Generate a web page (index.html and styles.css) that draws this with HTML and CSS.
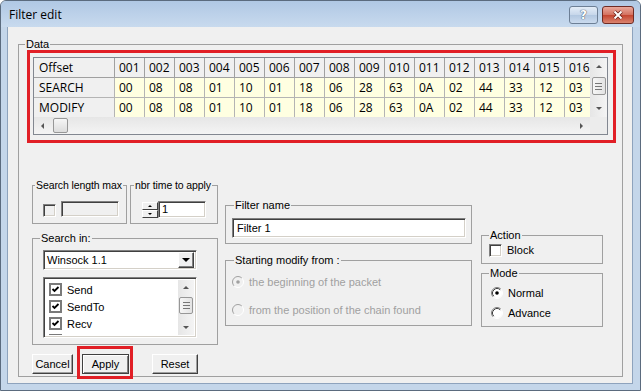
FILE: index.html
```html
<!DOCTYPE html>
<html lang="en">
<head>
    <meta charset="UTF-8">
    <title>Filter edit</title>
    <link rel="stylesheet" href="styles.css">
</head>
<body>
<div class="window">
    <div class="titlebar">
        <span class="title">Filter edit</span>
        <div class="caption">
            <span class="cap-btn help">?</span>
            <span class="cap-btn close">
                <svg width="14" height="10" viewBox="0 0 14 10"><path d="M3.5 1.5 L10.5 8.5 M10.5 1.5 L3.5 8.5" stroke="#6a2018" stroke-width="3.6"/><path d="M3.5 1.5 L10.5 8.5 M10.5 1.5 L3.5 8.5" stroke="#fff" stroke-width="2"/></svg>
            </span>
        </div>
    </div>

    <div class="client">
        <fieldset class="group g-data">
            <legend>Data</legend>

            <!-- offset / search / modify grid -->
            <div class="mark grid-mark">
                <div class="grid">
                    <div class="cells">
                        <table>
                            <tr class="head">
                                <td class="rh">Offset</td><td>001</td><td>002</td><td>003</td><td>004</td><td>005</td><td>006</td><td>007</td><td>008</td><td>009</td><td>010</td><td>011</td><td>012</td><td>013</td><td>014</td><td>015</td><td>016</td>
                            </tr>
                            <tr>
                                <td class="rh">SEARCH</td><td>00</td><td>08</td><td>08</td><td>01</td><td>10</td><td>01</td><td>18</td><td>06</td><td>28</td><td>63</td><td>0A</td><td>02</td><td>44</td><td>33</td><td>12</td><td>03</td>
                            </tr>
                            <tr>
                                <td class="rh">MODIFY</td><td>00</td><td>08</td><td>08</td><td>01</td><td>10</td><td>01</td><td>18</td><td>06</td><td>28</td><td>63</td><td>0A</td><td>02</td><td>44</td><td>33</td><td>12</td><td>03</td>
                            </tr>
                        </table>
                    </div>
                    <div class="vscroll">
                        <span class="sb-btn"><span class="arr up"></span></span>
                        <span class="thumb vthumb"><span class="grip"></span></span>
                        <span class="sb-btn end"><span class="arr down"></span></span>
                    </div>
                    <div class="hscroll">
                        <span class="sb-btn"><span class="arr left"></span></span>
                        <span class="thumb hthumb"></span>
                        <span class="sb-btn end"><span class="arr right"></span></span>
                    </div>
                    <div class="corner"></div>
                </div>
            </div>

            <div class="lower">
                <div class="col-left">
                    <div class="row-top">
                        <fieldset class="group g-slm">
                            <legend>Search length max</legend>
                            <div class="ctl-row">
                                <span class="chk off-dis"></span>
                                <span class="edit dis slm-edit"></span>
                            </div>
                        </fieldset>
                        <fieldset class="group g-nta">
                            <legend>nbr time to apply</legend>
                            <div class="ctl-row">
                                <span class="spin">
                                    <span class="spin-btn"><span class="arr up tiny"></span></span>
                                    <span class="spin-btn"><span class="arr down tiny"></span></span>
                                </span>
                                <span class="edit nta-edit">1</span>
                            </div>
                        </fieldset>
                    </div>

                    <fieldset class="group g-search">
                        <legend>Search in:</legend>
                        <div class="edit combo">
                            <span class="combo-text">Winsock 1.1</span>
                            <span class="combo-btn"><span class="arr down big"></span></span>
                        </div>
                        <div class="edit listbox">
                            <ul class="items">
                                <li><span class="chk flat"><svg width="9" height="9" viewBox="0 0 9 9"><path d="M1.5 4 L3.5 6 L7.5 2" stroke="#000" stroke-width="1.8" fill="none"/></svg></span>Send</li>
                                <li><span class="chk flat"><svg width="9" height="9" viewBox="0 0 9 9"><path d="M1.5 4 L3.5 6 L7.5 2" stroke="#000" stroke-width="1.8" fill="none"/></svg></span>SendTo</li>
                                <li><span class="chk flat"><svg width="9" height="9" viewBox="0 0 9 9"><path d="M1.5 4 L3.5 6 L7.5 2" stroke="#000" stroke-width="1.8" fill="none"/></svg></span>Recv</li>
                                <li><span class="chk flat"><svg width="9" height="9" viewBox="0 0 9 9"><path d="M1.5 4 L3.5 6 L7.5 2" stroke="#000" stroke-width="1.8" fill="none"/></svg></span>RecvFrom</li>
                            </ul>
                            <div class="lscroll">
                                <span class="sb-btn"><span class="arr up"></span></span>
                                <span class="thumb lthumb"><span class="grip"></span></span>
                                <span class="sb-btn end"><span class="arr down"></span></span>
                            </div>
                        </div>
                    </fieldset>

                    <div class="btn-row">
                        <button class="btn btn-cancel">Cancel</button>
                        <span class="mark apply-mark"><button class="btn btn-default">Apply</button></span>
                        <button class="btn btn-reset">Reset</button>
                    </div>
                </div>

                <div class="col-mid">
                    <fieldset class="group g-fname">
                        <legend>Filter name</legend>
                        <span class="edit fname-edit">Filter 1</span>
                    </fieldset>
                    <fieldset class="group g-modify">
                        <legend>Starting modify from :</legend>
                        <div class="opt dis first">
                            <svg class="radio" width="12" height="12" viewBox="0 0 12 12">
                                <circle cx="6" cy="6" r="5" fill="#f0f0f0"/>
                                <path d="M2.11 9.89A5.5 5.5 0 0 1 9.89 2.11" stroke="#a0a0a0" fill="none"/>
                                <path d="M9.89 2.11A5.5 5.5 0 0 1 2.11 9.89" stroke="#fff" fill="none"/>
                                <circle cx="6" cy="6" r="1.8" fill="#a0a0a0"/>
                            </svg>
                            the beginning of the packet
                        </div>
                        <div class="opt dis second">
                            <svg class="radio" width="12" height="12" viewBox="0 0 12 12">
                                <circle cx="6" cy="6" r="5" fill="#f0f0f0"/>
                                <path d="M2.11 9.89A5.5 5.5 0 0 1 9.89 2.11" stroke="#a0a0a0" fill="none"/>
                                <path d="M9.89 2.11A5.5 5.5 0 0 1 2.11 9.89" stroke="#fff" fill="none"/>
                            </svg>
                            from the position of the chain found
                        </div>
                    </fieldset>
                </div>

                <div class="col-right">
                    <fieldset class="group g-action">
                        <legend>Action</legend>
                        <div class="opt block-opt"><span class="chk"></span>Block</div>
                    </fieldset>
                    <fieldset class="group g-mode">
                        <legend>Mode</legend>
                        <div class="opt first">
                            <svg class="radio" width="12" height="12" viewBox="0 0 12 12">
                                <circle cx="6" cy="6" r="5" fill="#fff"/>
                                <path d="M2.11 9.89A5.5 5.5 0 0 1 9.89 2.11" stroke="#808080" fill="none"/>
                                <path d="M2.82 9.18A4.5 4.5 0 0 1 9.18 2.82" stroke="#404040" fill="none"/>
                                <path d="M9.89 2.11A5.5 5.5 0 0 1 2.11 9.89" stroke="#fff" fill="none"/>
                                <circle cx="6" cy="6" r="1.8" fill="#000"/>
                            </svg>
                            Normal
                        </div>
                        <div class="opt second">
                            <svg class="radio" width="12" height="12" viewBox="0 0 12 12">
                                <circle cx="6" cy="6" r="5" fill="#fff"/>
                                <path d="M2.11 9.89A5.5 5.5 0 0 1 9.89 2.11" stroke="#808080" fill="none"/>
                                <path d="M2.82 9.18A4.5 4.5 0 0 1 9.18 2.82" stroke="#404040" fill="none"/>
                                <path d="M9.89 2.11A5.5 5.5 0 0 1 2.11 9.89" stroke="#fff" fill="none"/>
                            </svg>
                            Advance
                        </div>
                    </fieldset>
                </div>
            </div>
        </fieldset>
    </div>
</div>
</body>
</html>
```

FILE: styles.css
```css
* {
    box-sizing: border-box;
}

body {
    margin: 0;
    font-family: "Liberation Sans", Arial, sans-serif;
    font-size: 11px;
    color: #000;
    background: #fff;
}

/* window frame */
.window {
    width: 641px;
    height: 391px;
    display: flex;
    flex-direction: column;
    background: #c4d6ea;
    border: 1px solid #5b6b7e;
    border-radius: 6px 6px 0 0;
}

.titlebar {
    height: 26px;
    display: flex;
    justify-content: space-between;
    align-items: flex-start;
    padding: 5px 6px 0 8px;
    background: linear-gradient(#b0c8e4, #c8daee);
    border-radius: 5px 5px 0 0;
}

.title {
    font-family: "Open Sans", sans-serif;
    font-size: 12px;
    line-height: 17px;
}

.caption {
    display: flex;
    gap: 4px;
}

.cap-btn {
    height: 18px;
    display: flex;
    align-items: center;
    justify-content: center;
    border: 1px solid #6d7f95;
    border-radius: 3px;
}

.help {
    width: 29px;
    background: linear-gradient(#e4edf7, #c6d6ea 50%, #b2c7e0 51%, #cbdbee);
    color: #fff;
    font: bold 12px "DejaVu Sans", sans-serif;
    text-shadow: 0 0 1px #34465c, 0 0 1px #34465c;
}

.close {
    width: 32px;
    background: linear-gradient(#eaa99c, #d3705f 50%, #c4442f 51%, #da8470);
    border-color: #6f2b24;
}

.client {
    flex: 1;
    margin: 0 7px 6px 6px;
    background: #f0f0f0;
    border: 1px solid #8ea3bd;
    border-top: 0;
}

/* group boxes */
.group {
    margin: 0;
    padding: 0;
    min-width: 0;
    border: 1px solid #a0a0a0;
}

.group legend {
    padding: 0 1px;
    margin-left: 7px;
    line-height: 12px;
    white-space: nowrap;
}

.g-data {
    margin: 11px 0 0 10px;
    width: 605px;
    height: 339px;
}

.g-data > legend {
    margin-left: 6px;
}

.mark {
    border: 3px solid #e11f26;
}

.grid-mark {
    margin-left: 8px;
    width: 589px;
    height: 93px;
    padding: 4px 3px;
}

/* data grid */
.grid {
    display: grid;
    grid-template-columns: 556px 17px;
    grid-template-rows: 59px 17px;
    width: 575px;
    border: 1px solid #828790;
    background: #ececec;
}

.cells {
    overflow: hidden;
    background: #fff;
}

.cells table {
    border-collapse: separate;
    border-spacing: 0;
    table-layout: fixed;
    width: 561px;
    font-family: "Open Sans", sans-serif;
    font-size: 12px;
}

.cells td {
    width: 30px;
    height: 20px;
    padding: 0 0 0 4px;
    line-height: 19px;
    white-space: nowrap;
    overflow: hidden;
    background: #ffffe1;
    border-right: 1px solid #b4b4b4;
    border-bottom: 1px solid #b4b4b4;
}

.cells td.rh {
    width: 81px;
    padding-left: 5px;
    background: #f0f0f0;
}

.cells .head td {
    background: #f0f0f0;
    border-color: #a0a0a0;
}

.vscroll,
.lscroll {
    display: flex;
    flex-direction: column;
    align-items: center;
    background: linear-gradient(90deg, #e6e6e6, #f4f4f4);
}

.hscroll {
    display: flex;
    align-items: center;
    background: linear-gradient(#e6e6e6, #f4f4f4);
}

.corner {
    background: #ececec;
}

.sb-btn {
    width: 17px;
    height: 17px;
    flex: none;
    display: flex;
    align-items: center;
    justify-content: center;
}

.sb-btn.end {
    margin-top: auto;
    margin-left: auto;
}

.vscroll .sb-btn.end,
.lscroll .sb-btn.end {
    margin-left: 0;
}

.hscroll .sb-btn.end {
    margin-top: 0;
}

.thumb {
    flex: none;
    display: flex;
    align-items: center;
    justify-content: center;
    border: 1px solid #979797;
    border-radius: 2px;
    background: linear-gradient(90deg, #f6f6f6, #e3e3e3);
}

.vthumb {
    width: 14px;
    height: 18px;
    margin-top: 2px;
}

.hthumb {
    width: 15px;
    height: 15px;
    margin-left: 2px;
    background: linear-gradient(#f6f6f6, #dcdcdc);
}

.grip {
    width: 7px;
    height: 7px;
    border-top: 1px solid #777;
    border-bottom: 1px solid #777;
    background: linear-gradient(transparent 2px, #777 2px, #777 3px, transparent 3px);
}

/* arrow glyphs */
.arr {
    display: block;
    width: 0;
    height: 0;
    border-style: solid;
}

.arr.up {
    border-width: 0 3px 3px;
    border-color: transparent transparent #555;
}

.arr.down {
    border-width: 3px 3px 0;
    border-color: #555 transparent transparent;
}

.arr.left {
    border-width: 3px 3px 3px 0;
    border-color: transparent #555 transparent transparent;
}

.arr.right {
    border-width: 3px 0 3px 3px;
    border-color: transparent transparent transparent #555;
}

.arr.big {
    border-width: 4px 4px 0;
    border-color: #000 transparent transparent;
}

.arr.tiny.up {
    border-width: 0 2px 2px;
    border-color: transparent transparent #000;
}

.arr.tiny.down {
    border-width: 2px 2px 0;
    border-color: #000 transparent transparent;
}

/* lower controls */
.lower {
    display: flex;
    align-items: flex-start;
    margin-left: 13px;
}

.col-left {
    width: 186px;
    margin-top: 36px;
}

.row-top {
    display: flex;
    gap: 3px;
}

.g-slm {
    width: 95px;
    height: 45px;
}

.g-slm legend {
    margin-left: 2px;
    font-size: 10.5px;
    letter-spacing: -0.1px;
}

.g-nta {
    width: 88px;
    height: 45px;
}

.g-nta legend {
    margin-left: 3px;
    font-size: 10.5px;
    letter-spacing: -0.1px;
}

.ctl-row {
    display: flex;
    align-items: flex-end;
    margin-top: 10px;
}

.chk {
    width: 13px;
    height: 13px;
    flex: none;
    display: flex;
    align-items: center;
    justify-content: center;
    background: #fff;
    border: 1px solid;
    border-color: #808080 #fff #fff #808080;
    box-shadow: inset 1px 1px #404040, inset -1px -1px #d4d0c8;
}

.chk.off-dis {
    margin-left: 10px;
    background: #f0f0f0;
}

.chk.flat {
    border: 2px solid #7a7a7a;
    box-shadow: none;
}

.edit {
    display: block;
    background: #fff;
    border: 1px solid;
    border-color: #808080 #fff #fff #808080;
    box-shadow: inset 1px 1px #404040, inset -1px -1px #d4d0c8;
}

.edit.dis {
    background: #f0f0f0;
}

.slm-edit {
    width: 58px;
    height: 16px;
    margin-left: 5px;
}

.spin {
    width: 16px;
    height: 16px;
    margin-left: 11px;
    display: flex;
    flex-direction: column;
}

.spin-btn {
    flex: 1;
    display: flex;
    align-items: center;
    justify-content: center;
    background: #f0f0f0;
    border: 1px solid;
    border-color: #fff #404040 #404040 #fff;
}

.nta-edit {
    width: 48px;
    height: 17px;
    padding-left: 3px;
    line-height: 15px;
}

.g-search {
    margin-top: 8px;
    height: 113px;
}

.combo {
    display: flex;
    align-items: center;
    justify-content: space-between;
    width: 154px;
    height: 20px;
    margin: 6px 0 0 10px;
    padding: 0 2px 0 3px;
}

.combo-btn {
    width: 16px;
    height: 16px;
    display: flex;
    align-items: center;
    justify-content: center;
    background: #f0f0f0;
    border: 1px solid;
    border-color: #fff #404040 #404040 #fff;
    box-shadow: inset -1px -1px #808080;
}

.listbox {
    display: flex;
    width: 154px;
    height: 61px;
    margin: 7px 0 0 10px;
    padding: 2px 2px 2px 2px;
    overflow: hidden;
}

.items {
    flex: 1;
    margin: 0;
    padding: 1px 0 0 3px;
    list-style: none;
    overflow: hidden;
}

.items li {
    height: 17px;
    display: flex;
    align-items: center;
    gap: 5px;
}

.lscroll {
    width: 16px;
    flex: none;
}

.lscroll .sb-btn {
    width: 16px;
    height: 15px;
}

.lthumb {
    width: 14px;
    height: 17px;
    margin-top: 2px;
}

.btn-row {
    display: flex;
    align-items: flex-start;
    margin-top: 1px;
}

.btn {
    height: 20px;
    padding: 0;
    font: 11px "Liberation Sans", Arial, sans-serif;
    color: #000;
    background: #f0f0f0;
    border: 1px solid;
    border-color: #fff #404040 #404040 #fff;
    box-shadow: inset -1px -1px #a0a0a0;
}

.btn-cancel {
    width: 41px;
    margin-top: 8px;
}

.apply-mark {
    display: block;
    margin-left: 4px;
    padding: 5px 1px 2px 2px;
}

.btn-default {
    width: 47px;
    border-color: #404040;
    box-shadow: inset 1px 1px #fff, inset -1px -1px #808080;
}

.btn-reset {
    width: 46px;
    margin: 8px 0 0 19px;
}

.col-mid {
    width: 247px;
    margin: 56px 0 0 7px;
}

.g-fname {
    height: 45px;
}

.g-fname legend,
.g-modify legend {
    margin-left: 8px;
}

.fname-edit {
    width: 234px;
    height: 20px;
    margin: 7px 0 0 6px;
    padding-left: 4px;
    line-height: 18px;
}

.g-modify {
    margin-top: 10px;
    height: 72px;
}

.opt {
    height: 16px;
    display: flex;
    align-items: center;
    gap: 5px;
}

.opt.dis {
    color: #a0a0a0;
    padding-left: 6px;
}

.g-modify .first {
    margin-top: 8px;
}

.g-modify .second {
    margin-top: 12px;
}

.radio {
    flex: none;
}

.col-right {
    width: 122px;
    margin: 86px 0 0 9px;
}

.g-action {
    height: 35px;
}

.block-opt {
    margin-top: 1px;
    padding-left: 7px;
}

.g-mode {
    margin-top: 3px;
    height: 60px;
}

.g-mode .opt {
    padding-left: 9px;
}

.g-mode .first {
    margin-top: 6px;
}

.g-mode .second {
    margin-top: 4px;
}
```
